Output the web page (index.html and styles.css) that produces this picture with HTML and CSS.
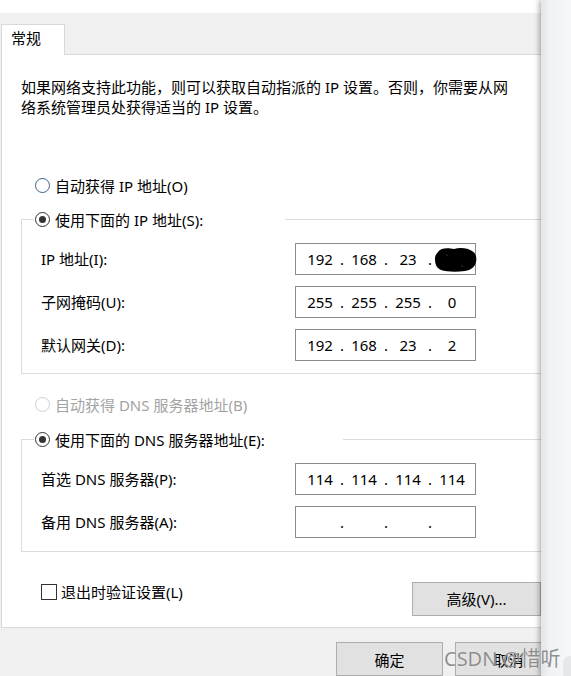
FILE: index.html
```html
<!DOCTYPE html>
<html lang="zh-CN">
<head>
<meta charset="utf-8">
<title>Internet 协议版本 4 (TCP/IPv4) 属性</title>
<link rel="stylesheet" href="styles.css">
</head>
<body>
<div class="screen">
  <div class="dialog">
    <div class="titlebar"><span class="title">Internet 协议版本 4 (TCP/IPv4) 属性</span></div>
    <div class="tabstrip"><div class="tab">常规</div></div>
    <div class="panel">
      <p class="desc">如果网络支持此功能，则可以获取自动指派的 IP 设置。否则，你需要从网<br>络系统管理员处获得适当的 IP 设置。</p>

      <div class="radio-row ip-auto"><span class="radio focus"></span><span>自动获得 IP 地址(O)</span></div>
      <fieldset class="group ip-group">
        <legend class="legend ip-legend"><span class="radio checked"></span><span>使用下面的 IP 地址(S):</span></legend>
        <div class="fields">
          <span class="label">IP 地址(I):</span>
          <div class="ipbox">
            <span class="seg">192</span><span class="dot">.</span><span class="seg">168</span><span class="dot">.</span><span class="seg">23</span><span class="dot">.</span>
            <span class="seg blot"><svg width="42" height="26" viewBox="0 0 42 26"><path d="M3 6 C6 1 14 2 19 3 C25 1 33 2 37 5 C41 7 42 12 41 16 C40 21 36 24 30 25 C22 26 12 26 6 24 C1 22 0 17 0 13 C0 10 1 8 3 6 Z" fill="#000"/><circle cx="12" cy="9" r="0.6" fill="#666"/><circle cx="27" cy="20" r="0.6" fill="#666"/></svg></span>
          </div>
          <span class="label">子网掩码(U):</span>
          <div class="ipbox">
            <span class="seg">255</span><span class="dot">.</span><span class="seg">255</span><span class="dot">.</span><span class="seg">255</span><span class="dot">.</span><span class="seg">0</span>
          </div>
          <span class="label">默认网关(D):</span>
          <div class="ipbox">
            <span class="seg">192</span><span class="dot">.</span><span class="seg">168</span><span class="dot">.</span><span class="seg">23</span><span class="dot">.</span><span class="seg">2</span>
          </div>
        </div>
      </fieldset>

      <div class="radio-row dns-auto disabled"><span class="radio"></span><span>自动获得 DNS 服务器地址(B)</span></div>
      <fieldset class="group dns-group">
        <legend class="legend dns-legend"><span class="radio checked"></span><span>使用下面的 DNS 服务器地址(E):</span></legend>
        <div class="fields">
          <span class="label">首选 DNS 服务器(P):</span>
          <div class="ipbox">
            <span class="seg">114</span><span class="dot">.</span><span class="seg">114</span><span class="dot">.</span><span class="seg">114</span><span class="dot">.</span><span class="seg">114</span>
          </div>
          <span class="label">备用 DNS 服务器(A):</span>
          <div class="ipbox">
            <span class="seg"></span><span class="dot">.</span><span class="seg"></span><span class="dot">.</span><span class="seg"></span><span class="dot">.</span><span class="seg"></span>
          </div>
        </div>
      </fieldset>

      <div class="bottom-row">
        <div class="check-row"><span class="checkbox"></span><span>退出时验证设置(L)</span></div>
        <div class="button advanced">高级(V)...</div>
      </div>
    </div>
    <div class="footer">
      <div class="button ok">确定</div>
      <div class="button cancel">取消</div>
    </div>
  </div>
  <div class="edge">
    <svg class="scroll-bits" width="30" height="20" viewBox="0 0 30 20"><path d="M10 4 L6 7.5 L10 11 Z" fill="#9aa6b8"/><rect x="22" y="0" width="14" height="24" rx="7" fill="#e6e7ea"/></svg>
  </div>
  <div class="watermark">CSDN @惜听</div>
</div>
</body>
</html>
```

FILE: styles.css
```css
* { box-sizing: border-box; }
html, body { margin: 0; padding: 0; }
body {
  width: 571px;
  height: 676px;
  overflow: hidden;
  background: #f0f0f0;
  font-family: "Noto Sans", "Noto Sans CJK SC", sans-serif;
  font-size: 15px;
  color: #000;
}
.screen {
  display: flex;
  height: 676px;
  position: relative;
}
.dialog {
  width: 541px;
  flex: none;
  display: flex;
  flex-direction: column;
  background: #f0f0f0;
}
.titlebar {
  height: 13px;
  background: #fff;
  overflow: hidden;
  padding-left: 10px;
}
.title {
  display: block;
  line-height: 20px;
  margin-top: -19px;
  white-space: nowrap;
}
.tabstrip {
  display: flex;
  align-items: flex-end;
  height: 42px;
  padding-top: 11px;
  margin-left: 1px;
  border-bottom: 1px solid #d9d9d9;
}
.tab {
  width: 64px;
  height: 31px;
  margin-bottom: -1px;
  background: #fff;
  border: 1px solid #d9d9d9;
  border-bottom: none;
  padding-left: 9px;
  line-height: 27px;
}
.panel {
  height: 583px;
  margin-left: 1px;
  background: #fff;
  border-left: 1px solid #d9d9d9;
  border-bottom: 1px solid #d9d9d9;
  display: flex;
  flex-direction: column;
}
.desc {
  margin: 0;
  padding: 22px 0 0 19px;
  line-height: 20px;
  white-space: nowrap;
}
.radio-row {
  display: flex;
  align-items: center;
  height: 20px;
  line-height: 20px;
  padding-left: 33px;
  white-space: nowrap;
}
.ip-auto { margin-top: 59px; }
.dns-auto { margin-top: 21px; }
.radio {
  width: 15px;
  height: 15px;
  border-radius: 50%;
  border: 1px solid #333;
  background: #fff;
  margin-right: 5px;
  flex: none;
  display: flex;
  align-items: center;
  justify-content: center;
}
.radio.focus { border-color: #3a5e8c; }
.radio.checked::after {
  content: "";
  width: 7px;
  height: 7px;
  border-radius: 50%;
  background: #333;
}
.disabled { color: #a3a3a3; }
.disabled .radio { border-color: #cfcfcf; }
.group {
  margin: 0 0 0 19px;
  min-width: 0;
  border: 1px solid #dcdcdc;
  border-right: none;
}
.ip-group { margin-top: 14px; padding: 13px 0 12px 19px; }
.dns-group { margin-top: 15px; padding: 13px 0 13px 19px; }
.legend {
  display: flex;
  align-items: center;
  height: 20px;
  line-height: 20px;
  margin-left: -7px;
  padding: 0 0 0 1px;
  white-space: nowrap;
}
.ip-legend { width: 251px; }
.dns-legend { width: 309px; }
.fields {
  display: grid;
  grid-template-columns: 254px 181px;
  row-gap: 11px;
  align-items: center;
}
.label { white-space: nowrap; }
.ipbox {
  height: 32px;
  border: 1px solid #8c8c8c;
  background: #fff;
  display: grid;
  grid-template-columns: 34px 10px 34px 10px 34px 10px 34px;
  align-items: center;
  padding-left: 7px;
  line-height: 20px;
}
.seg { text-align: center; }
.dot { text-align: center; }
.blot { overflow: visible; }
.blot svg { display: block; overflow: visible; }
.bottom-row {
  display: flex;
  align-items: flex-start;
  margin-top: 30px;
  padding-left: 39px;
}
.check-row {
  display: flex;
  align-items: center;
  height: 20px;
  white-space: nowrap;
}
.checkbox {
  width: 16px;
  height: 16px;
  border: 1px solid #333;
  background: #fff;
  margin-right: 4px;
  flex: none;
}
.button {
  height: 34px;
  background: #e1e1e1;
  border: 1px solid #adadad;
  display: flex;
  align-items: center;
  justify-content: center;
  white-space: nowrap;
}
.advanced {
  width: 129px;
  margin-left: auto;
}
.footer {
  display: flex;
  gap: 12px;
  padding: 14px 0 0 336px;
}
.ok, .cancel { width: 107px; flex: none; }
.edge {
  flex: 1;
  position: relative;
  z-index: 1;
  background: linear-gradient(to right, #e3e4e7, #f1f2f4 30%, #f6f7f8);
  box-shadow: -2px 0 5px rgba(0, 0, 0, 0.3);
  display: flex;
  align-items: flex-end;
}
.scroll-bits { display: block; margin-left: 0; }
.watermark {
  position: absolute;
  left: 444px;
  top: 645px;
  z-index: 2;
  font-size: 20px;
  line-height: 28px;
  color: rgba(105, 105, 105, 0.75);
  text-shadow: 0 0 1px rgba(255, 255, 255, 0.9);
  white-space: nowrap;
}
```
